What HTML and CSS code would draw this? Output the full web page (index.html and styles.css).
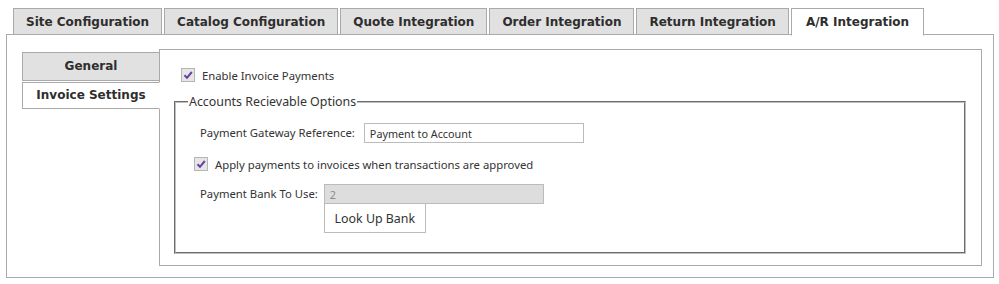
FILE: index.html
```html
<!DOCTYPE html>
<html lang="en">
<head>
  <meta charset="UTF-8" />
  <title>A/R Integration</title>
  <link rel="stylesheet" href="styles.css">
</head>
<body>
  <div class="tabs">
    <div class="tab">Site Configuration</div>
    <div class="tab">Catalog Configuration</div>
    <div class="tab">Quote Integration</div>
    <div class="tab">Order Integration</div>
    <div class="tab">Return Integration</div>
    <div class="tab active">A/R Integration</div>
  </div>

  <div class="panel">
    <div class="side">
      <div class="side-tab">General</div>
      <div class="side-tab active">Invoice Settings</div>
    </div>

    <div class="content">
      <label class="check-row">
        <span class="check"><svg viewBox="0 0 14 14" width="14" height="14"><path d="M3.5 7.2 L6 9.8 L10.8 4" fill="none" stroke="#6b3fa0" stroke-width="2" /></svg></span>
        Enable Invoice Payments
      </label>

      <fieldset class="options">
        <legend>Accounts Recievable Options</legend>

        <div class="row gateway">
          <span class="label">Payment Gateway Reference:</span>
          <input type="text" class="field" value="Payment to Account" />
        </div>

        <label class="check-row inner">
          <span class="check"><svg viewBox="0 0 14 14" width="14" height="14"><path d="M3.5 7.2 L6 9.8 L10.8 4" fill="none" stroke="#6b3fa0" stroke-width="2" /></svg></span>
          Apply payments to invoices when transactions are approved
        </label>

        <div class="row bank">
          <span class="label">Payment Bank To Use:</span>
          <div class="stack">
            <input type="text" class="field" value="2" disabled />
            <button class="btn">Look Up Bank</button>
          </div>
        </div>
      </fieldset>
    </div>
  </div>
</body>
</html>
```

FILE: styles.css
```css
:root {
  --border: #aaa;
  --tab-bg: #e1e1e1;
  --text: #333;
}
* { box-sizing: border-box; }
body {
  margin: 0;
  background: #fff;
  color: var(--text);
  font-family: 'Noto Sans', sans-serif;
  font-size: 11.3px;
}
.tabs {
  display: flex;
  gap: 2px;
  margin-left: 13px;
  padding-top: 8px;
  position: relative;
  z-index: 1;
}
.tab {
  height: 27px;
  padding: 0 12px;
  border: 1px solid var(--border);
  background: var(--tab-bg);
  font-family: 'DejaVu Sans', Verdana, sans-serif;
  font-weight: bold;
  font-size: 12px;
  line-height: 26px;
  color: #2e2e2e;
}
.tab.active {
  background: #fff;
  border-bottom-color: #fff;
  height: 28px;
  padding: 0 14px;
  margin-bottom: -1px;
}
.panel {
  display: flex;
  margin: -1px 0 0 6px;
  width: 988px;
  height: 244px;
  border: 1px solid var(--border);
  padding: 14px 11px 11px 15px;
}
.side {
  width: 138px;
  padding-top: 3px;
  position: relative;
  z-index: 1;
}
.side-tab {
  border: 1px solid var(--border);
  background: var(--tab-bg);
  text-align: center;
  font-family: 'DejaVu Sans', Verdana, sans-serif;
  font-weight: bold;
  font-size: 12px;
  color: #2e2e2e;
  height: 29px;
  line-height: 27px;
  margin-bottom: 1px;
}
.side-tab.active {
  background: #fff;
  border-right-color: #fff;
  height: 27px;
  line-height: 25px;
}
.content {
  flex: 1;
  margin-left: -1px;
  border: 1px solid var(--border);
  padding: 18px 15px 12px 14px;
}
.check-row {
  display: flex;
  align-items: center;
  gap: 7px;
  margin-left: 7px;
  height: 14px;
}
.check {
  width: 14px;
  height: 14px;
  border: 1px solid #b5b5b5;
  background: #e6e6e6;
  display: inline-flex;
}
.check svg { display: block; margin: -1px; }
.options {
  margin: 11px 0 0 0;
  border: 2px groove #c0c0c0;
  padding: 13px 0 0 24px;
  height: 161px;
}
.options legend {
  font-size: 12.4px;
  padding: 0 1px;
  margin-left: -12px;
}
.row {
  display: flex;
  gap: 7px;
  align-items: flex-start;
}
.row.gateway { gap: 9px; }
.label { line-height: 20px; }
.field {
  width: 220px;
  height: 20px;
  border: 1px solid #bbb;
  padding: 0 5px;
  font-family: 'Noto Sans', sans-serif;
  font-size: 10.8px;
  color: #333;
  background: #fff;
}
.field:disabled {
  background: #ddd;
  color: #888;
}
.check-row.inner {
  margin: 14px 0 0 -6px;
}
.bank {
  margin-top: 13px;
  gap: 6px;
}
.stack {
  display: flex;
  flex-direction: column;
  align-items: flex-start;
}
.btn {
  width: 102px;
  height: 29px;
  border: 1px solid #bbb;
  border-top: none;
  background: #fff;
  font-family: 'Noto Sans', sans-serif;
  font-size: 12.4px;
  color: #333;
  padding: 0;
}
```
